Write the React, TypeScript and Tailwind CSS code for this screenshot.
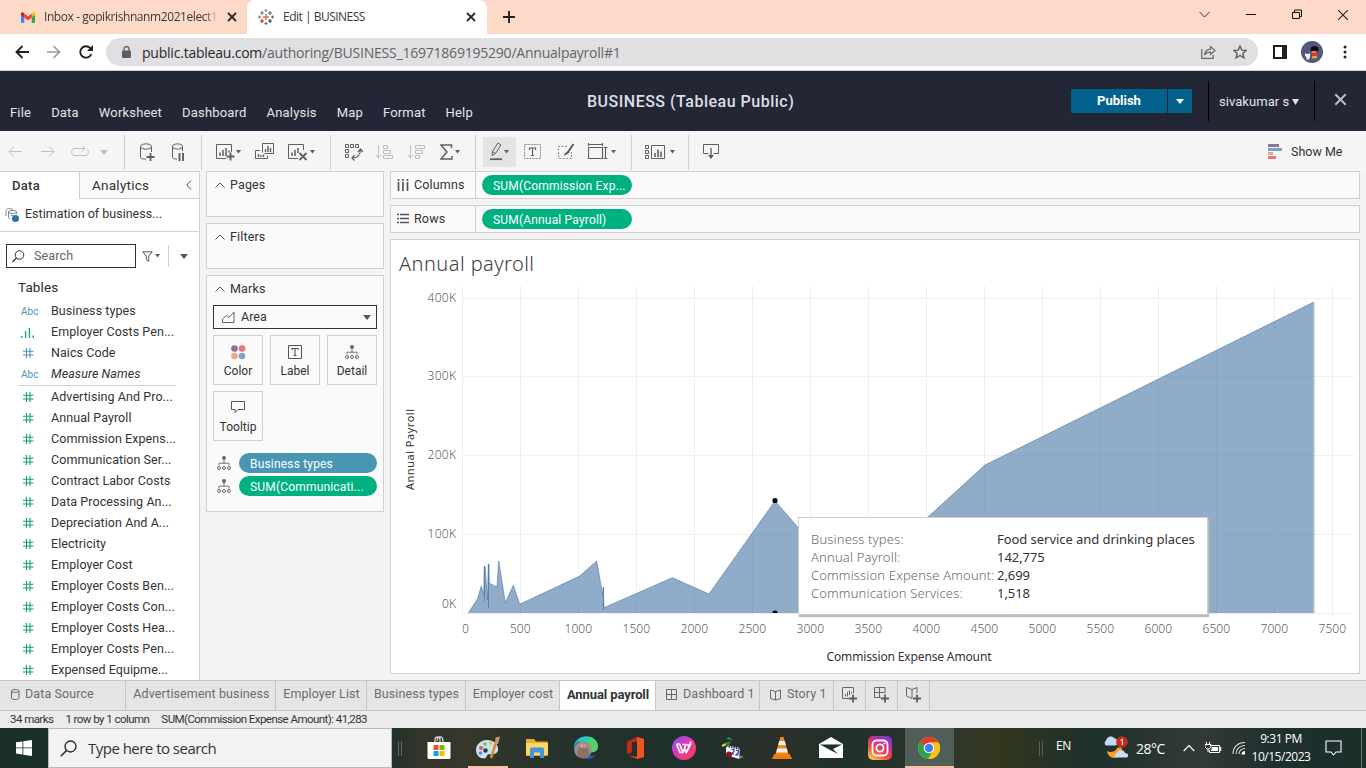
import React from "react";

const benton = "font-['Roboto','Liberation_Sans',sans-serif]";
const segoe = "font-['Open_Sans','Noto_Sans',sans-serif]";
const book = "font-['Noto_Sans','Open_Sans',sans-serif]";

function Svg({ w, h = 20, className = "", children }: { w: number; h?: number; className?: string; children: React.ReactNode }) {
  return (
    <svg width={w} height={h} viewBox={`0 0 ${w} ${h}`} fill="none" className={`shrink-0 ${className}`}>
      {children}
    </svg>
  );
}

/* ---------- Browser chrome ---------- */

function Gmail() {
  return (
    <Svg w={14} h={11}>
      <path d="M0 1.500V10a1 1 0 0 0 1 1h2.300V4.500Z" fill="#4285f4" />
      <path d="M14 1.500V10a1 1 0 0 1-1 1h-2.300V4.500Z" fill="#34a853" />
      <path d="M10.700 1.600 12 .5c.9-.6 2 0 2 1.200V3l-3.300 2.600Z" fill="#fbbc04" />
      <path d="M3.300 1.600 7 4.500l3.700-2.900v4L7 8.500 3.300 5.600Z" fill="#ea4335" />
      <path d="M0 3V1.700C0 .5 1.100-.1 2 .5l1.300 1.100v4Z" fill="#c5221f" />
    </Svg>
  );
}

function TableauMark() {
  return (
    <Svg w={16} h={16}>
      <g strokeWidth="1.200">
        <path d="M8 5v6M5 8h6" stroke="#e8762d" strokeWidth="1.500" />
        <path d="M4 2v4M2 4h4" stroke="#5b879b" />
        <path d="M12 2v4M10 4h4" stroke="#5b6591" />
        <path d="M4 10v4M2 12h4" stroke="#c72037" />
        <path d="M12 10v4M10 12h4" stroke="#1f457e" />
        <path d="M8 0v3M6.500 1.500h3" stroke="#7199a6" />
        <path d="M8 13v3M6.500 14.500h3" stroke="#5b6591" />
        <path d="M1.500 6.500v3M0 8h3" stroke="#5b879b" />
        <path d="M14.500 6.500v3M13 8h3" stroke="#5b6591" />
      </g>
    </Svg>
  );
}

function Cross({ size, className = "", sw = 1.8 }: { size: number; className?: string; sw?: number }) {
  return (
    <svg width={size} height={size} viewBox="0 0 10 10" fill="none" className={`shrink-0 ${className}`}>
      <path d="M1 1l8 8M9 1l-8 8" stroke="currentColor" strokeWidth={sw} />
    </svg>
  );
}

function TabStrip() {
  return (
    <div className={`flex h-[34px] items-center bg-[#fddac7] text-[12px] text-[#3c3836] ${segoe}`}>
      <div className="flex h-full w-[247px] items-center rounded-br-lg pl-[21px]">
        <Gmail />
        <div className="ml-[9px] w-[176px] whitespace-nowrap tracking-[-0.42px] [mask-image:linear-gradient(to_right,black_91%,transparent_99%)]">
          Inbox - gopikrishnanm2021elect1
        </div>
        <Cross size={10} className="ml-[7px] text-[#2d2a29]" />
      </div>
      <div className="flex h-full w-[240px] items-center rounded-t-lg bg-white pl-[11px]">
        <TableauMark />
        <span className="ml-[9px] w-[183px] tracking-[-0.5px]">Edit | BUSINESS</span>
        <Cross size={10} className="text-[#2d2a29]" />
      </div>
      <Svg w={12} h={12} className="ml-[16px]">
        <path d="M6 0v12M0 6h12" stroke="#222" strokeWidth="1.900" />
      </Svg>
      <div className="ml-auto flex items-center pb-[5px] pr-[17px] text-[#1b1b1b]">
        <Svg w={11} h={7}><path d="M.5 1l5 5 5-5" stroke="#333" /></Svg>
        <Svg w={11} h={11} className="ml-[36px]"><path d="M0 5.500h10" stroke="#111" /></Svg>
        <Svg w={11} h={11} className="ml-[35px]"><path d="M.5 3.500h7v6h-7zM2.500 3V1h7v6.500H8" stroke="#111" /></Svg>
        <Cross size={12} className="ml-[34px] text-[#222]" sw={0.9} />
      </div>
    </div>
  );
}

function AddressBar() {
  return (
    <div className="flex h-[37px] items-center border-b border-[#cfd0d3] bg-white">
      <Svg w={14} h={14} className="ml-[15px]">
        <path d="M14 7H1.500M7.500 1L1.500 7l6 6" stroke="#222" strokeWidth="1.900" />
      </Svg>
      <Svg w={14} h={14} className="ml-[18px]">
        <path d="M0 7h12.500M6.500 1l6 6-6 6" stroke="#9b9b9b" strokeWidth="1.700" />
      </Svg>
      <Svg w={14} h={14} className="ml-[18px]">
        <path d="M12.300 9A5.700 5.700 0 1 1 11.300 3.200L13 5" stroke="#222" strokeWidth="1.900" />
        <path d="M14 0v6H8z" fill="#222" />
      </Svg>
      <div className="ml-[13px] flex h-[28px] w-[1152px] items-center rounded-full bg-[#e0e0e2] pl-[16px] pr-[11px]">
        <Svg w={9} h={12}>
          <path d="M2 5V3a2.500 2.500 0 0 1 5 0v2" stroke="#5c5e61" strokeWidth="1.300" />
          <rect y="4.500" width="9" height="7.500" rx="1" fill="#5c5e61" />
        </Svg>
        <span className={`ml-[11px] text-[14px] tracking-[-0.22px] text-[#626365] ${segoe}`}>
          <span className="text-[#27282a]">public.tableau.com</span>/authoring/BUSINESS_16971869195290/Annualpayroll#1
        </span>
        <Svg w={15} h={14} className="ml-auto">
          <path d="M.7 4v9.300h11.500V10" stroke="#66686b" strokeWidth="1.200" />
          <path d="M3.500 10C4 6 6 4.500 9.500 4.200V1.500L14 5.500l-4.500 4V7C7 7 5 7.800 3.500 10z" stroke="#66686b" strokeWidth="1.200" />
        </Svg>
        <Svg w={14} h={14} className="ml-[17px]">
          <path d="M7 1l1.800 4.100 4.400.4-3.400 2.900 1.100 4.400L7 10.500l-3.900 2.300 1.100-4.400L.8 5.500l4.400-.4z" stroke="#5c5e61" strokeWidth="1.400" />
        </Svg>
      </div>
      <Svg w={14} h={14} className="ml-[15px]">
        <path d="M1 1h12v12H1z" stroke="#1e1f21" strokeWidth="2" />
        <path d="M9 0h5v14H9z" fill="#1e1f21" />
      </Svg>
      <Svg w={22} h={22} className="ml-[14px]">
        <circle cx="11" cy="11" r="11" fill="#53597d" />
        <ellipse cx="13.500" cy="8.500" rx="4" ry="3.500" fill="#120f14" />
        <path d="M10.500 10h5.500v5h-5z" fill="#d33a36" />
        <path d="M10.500 10.500h5v1h-5z" fill="#f0b49a" />
        <path d="M11 15h5v2.500h-5z" fill="#e8a33c" />
        <path d="M4 12l1.500 1h2l1.500-1v4l-1 2.500H5.500V16L4 15z" fill="#f5f3f5" />
      </Svg>
      <Svg w={4} h={14} className="ml-[20px]">
        <circle cx="2" cy="2" r="1.500" fill="#222" /><circle cx="2" cy="7" r="1.500" fill="#222" /><circle cx="2" cy="12" r="1.500" fill="#222" />
      </Svg>
    </div>
  );
}

/* ---------- Tableau header ---------- */

function Header() {
  return (
    <div className={`flex h-[60px] bg-[#232635] text-[13px] text-[#e4e5e8] ${benton}`}>
      <div className="flex w-[587px] gap-[20px] pl-[10px] pt-[32px] tracking-[0.18px]">
        {["File", "Data", "Worksheet", "Dashboard", "Analysis", "Map", "Format", "Help"].map((m) => (
          <span key={m}>{m}</span>
        ))}
      </div>
      <div className="w-[484px] whitespace-nowrap pt-[19px] text-[16px] font-medium tracking-[0.5px] text-[#dedee3]">BUSINESS (Tableau Public)</div>
      <div className="mt-[18px] flex h-[24px] items-center gap-px text-white">
        <div className="flex h-full w-[96px] items-center justify-center rounded-l-[1px] bg-[#04618b] font-bold">Publish</div>
        <div className="flex h-full w-[24px] items-center justify-center rounded-r-[1px] bg-[#04618b]">
          <Svg w={8} h={5}><path d="M0 0h8L4 5z" fill="#fff" /></Svg>
        </div>
      </div>
      <div className="ml-[16px] mt-[10px] flex h-[40px] w-[107px] items-center border-x border-black pl-[10px] pt-px">
        <span className="tracking-[0.05px]">sivakumar s</span>
        <Svg w={7} h={6} className="ml-[3px]"><path d="M0 0h7L3.500 6z" fill="#e4e5e8" /></Svg>
      </div>
      <Cross size={13} className="ml-[19px] mt-[22px] text-[#bfc0c6]" sw={1.5} />
    </div>
  );
}

/* ---------- Toolbar ---------- */

const G = "#5f5f5f";
const L = "#bdbdbd";

function Sep({ className }: { className: string }) {
  return <div className={`mt-[2px] h-[35px] w-px shrink-0 self-start bg-[#cfcfcf] ${className}`} />;
}
function Caret({ className = "", color = "#5f5f5f" }: { className?: string; color?: string }) {
  return <Svg w={5} h={4} className={className}><path d="M0 0h5L2.500 3.500z" fill={color} /></Svg>;
}

function Toolbar() {
  return (
    <div className={`flex h-[40px] items-center bg-[#f5f5f5] pt-[2px] ${benton}`}>
      <Svg w={14} className="ml-[8px]"><path d="M14 9.500H1.500M6 4.500l-5 5 5 5" stroke={L} /></Svg>
      <Svg w={14} className="ml-[19px]"><path d="M0 9.500h12.500M8 4.500l5 5-5 5" stroke={L} /></Svg>
      <Svg w={18} className="ml-[16px]"><path d="M13.500 6.500H4a3.500 3.500 0 0 0 0 7h10a3.500 3.500 0 0 0 2.500-6M11 3.500l3 3-3 3" stroke={L} /></Svg>
      <Svg w={8} h={5} className="ml-[11px]"><path d="M0 0h8L4 5z" fill={L} /></Svg>
      <Sep className="ml-[16px]" />
      <Svg w={15} className="ml-[15px]">
        <path d="M6 17H3.500C1.500 17 .5 16 .5 15V4.500C.5 1 11.500 1 11.500 4.500V10M.5 4.500c0 3.500 11 3.500 11 0" stroke={G} />
        <path d="M10.500 11v8M6.500 15h8" stroke={G} strokeWidth="1.800" />
      </Svg>
      <Svg w={13} className="ml-[17px]">
        <path d="M5 17H3.500C1.500 17 .5 16 .5 15V4.500C.5 1 10.500 1 10.500 4.500V9M.5 4.500c0 3.500 10 3.500 10 0" stroke={G} />
        <path d="M7.500 11v8M11 11v8" stroke={G} strokeWidth="1.900" />
      </Svg>
      <Sep className="ml-[16px]" />
      <Svg w={19} className="ml-[14px]">
        <path d="M10 16.500H.5v-14h15V10" stroke={G} />
        <path d="M4 10.500V14M7 8v6M10 6v8M13 8.500v2" stroke={G} strokeWidth="1.500" />
        <path d="M14.500 10.500v8M10.500 14.500h8" stroke={G} strokeWidth="1.800" />
      </Svg>
      <Caret className="ml-[1px]" />
      <Svg w={19} className="ml-[14px]">
        <path d="M7.500 10.500v-9h11v10h-9M5 8.500H.5v8h12v-3" stroke={G} />
        <path d="M10.500 7v3M13 4v6M15.500 6v4M3.500 12v3M6 13v2M8.500 12.500v2.500" stroke={G} strokeWidth="1.400" />
      </Svg>
      <Svg w={20} className="ml-[14px]">
        <path d="M10 16.500H.5v-14h15V8" stroke={G} />
        <path d="M4 10.500V14M7 8v6M10 6v5" stroke={G} strokeWidth="1.500" />
        <path d="M11.500 11l7 7M18.500 11l-7 7" stroke={G} strokeWidth="1.800" />
      </Svg>
      <Caret className="ml-[2px]" />
      <Sep className="ml-[15px]" />
      <Svg w={18} className="ml-[14px]">
        <path d="M.5 2.500h3v3h-3zM5.500 2.500h3v3h-3zM10.500 2.500h3v3h-3zM.5 7.500h3v3h-3zM.5 12.500h3v3h-3z" stroke={G} />
        <path d="M15.500 7.500c0 5-3 8.500-8 8.500M13 10l2.500-3 2.500 3M9.500 13l-2.500 3 2.500 2.500" stroke={G} strokeWidth="1.200" />
      </Svg>
      <Svg w={18} className="ml-[13px]">
        <path d="M2.500 3v13M0 13l2.500 3L5 13M7.500 3.500h4v3h-4zM7.500 8.500h7v3h-7zM7.500 13.500h9v3h-9z" stroke={L} />
      </Svg>
      <Svg w={18} className="ml-[14px]">
        <path d="M2.500 3v13M0 13l2.500 3L5 13M7.500 3.500h9v3h-9zM7.500 8.500h7v3h-7zM7.500 13.500h4v3h-4z" stroke={L} />
      </Svg>
      <Svg w={13} className="ml-[14px]">
        <path d="M11.500 6V3H1l6 7-6 7h11v-3" stroke={G} strokeWidth="1.500" />
      </Svg>
      <Caret className="ml-[2px]" />
      <Sep className="ml-[15px]" />
      <div className="ml-[7px] flex h-[30px] w-[33px] items-center bg-[#e4e4e4]">
        <Svg w={12} className="ml-[7px]">
          <path d="M2.500 9.500L8 1l3 2-5.500 8.500-3.500 2z" stroke={G} />
          <path d="M2.500 9.500l3 2" stroke={G} /><path d="M0 17.200h12" stroke={G} strokeWidth="1.800" />
        </Svg>
        <Caret className="ml-[2px]" />
      </div>
      <Svg w={17} className="ml-[8px]">
        <path d="M.5 2.500h16v14H.5z" stroke="#8a8a8a" strokeDasharray="2 1" />
        <path d="M5.500 8v-2h6v2M8.500 6v7.500M7 13.500h3" stroke={G} strokeWidth="1.200" />
      </Svg>
      <Svg w={17} className="ml-[17px]">
        <path d="M9 4.500H.5v12h13V10" stroke="#8a8a8a" strokeDasharray="2 1.500" />
        <path d="M15.500 2l-5.500 8" stroke={G} strokeWidth="2" /><path d="M10 9l1.500 1.500L8 13l-2 .5.5-2z" fill={G} />
      </Svg>
      <Svg w={20} className="ml-[13px]">
        <path d="M.5 5.500h14v11H.5zM.5 1v3M14.500 1v3M.5 2.500h14M17.500 5.500v11M16 5.500h3.500M16 16.500h3.500" stroke={G} strokeWidth="1.200" />
      </Svg>
      <Caret className="ml-[3px]" />
      <Sep className="ml-[15px]" />
      <Svg w={20} className="ml-[13px]">
        <path d="M.5 3.500h3v3h-3zM.5 8.500h3v3h-3zM.5 13.500h3v3h-3zM6.500 3.500h13v13h-13z" stroke={G} />
        <path d="M10 11v4M13 7.500V15M16 9.500V15" stroke={G} strokeWidth="1.600" />
      </Svg>
      <Caret className="ml-[5px]" />
      <Sep className="ml-[13px]" />
      <Svg w={16} className="ml-[14px]">
        <path d="M5.500 11.500h-5v-9h15v9h-5" stroke={G} /><path d="M8 6v9" stroke={G} strokeWidth="1.400" /><path d="M5 13h6l-3 4z" fill={G} />
      </Svg>
      <Svg w={15} h={16} className="mb-px ml-auto">
        <path d="M0 0h11v3H0z" fill="#8b7596" /><path d="M0 4h14v3H0z" fill="#7ea2c6" />
        <path d="M0 8h5v3H0z" fill="#efa780" /><path d="M0 12h8v3H0z" fill="#ec7381" />
      </Svg>
      <span className="ml-[8px] mr-[23px] w-[52px] whitespace-nowrap text-[12.5px] text-[#333]">Show Me</span>
    </div>
  );
}

/* ---------- Data pane ---------- */

function Hash({ color }: { color: string }) {
  return <Svg w={11} h={10}><path d="M3.500 0v10M7 0v10M0 3.200h10.500M0 7h10.500" stroke={color} strokeWidth="1.100" /></Svg>;
}
function FieldIcon({ kind }: { kind: string }) {
  if (kind === "abc") return <span className="text-[10px] text-[#4996b2]">Abc</span>;
  if (kind === "bin")
    return <Svg w={14} h={10}><path d="M.8 8v2M4.600 3v7M8.400 0v10M12.200 7.500V10" stroke="#12a07c" strokeWidth="1.300" /></Svg>;
  return <Hash color={kind === "dim" ? "#4996b2" : "#12a07c"} />;
}
function Field({ kind, name, italic = false }: { kind: string; name: string; italic?: boolean }) {
  return (
    <div className="flex h-[21px] items-center pl-[21px]">
      <div className={`flex w-[30px] items-center ${kind === "abc" || kind === "bin" ? "" : "pb-px pl-[2px]"}`}><FieldIcon kind={kind} /></div>
      <span className={`whitespace-nowrap tracking-[0.07px] ${italic ? "italic" : ""}`}>{name}</span>
    </div>
  );
}

function DataPane() {
  return (
    <div className="flex h-[509px] w-[200px] shrink-0 flex-col overflow-hidden border-r border-t border-[#d0d0d0] bg-white text-[12.5px] text-[#333]">
      <div className="flex h-[27px] shrink-0 text-[13.5px]">
        <div className="flex w-[79px] items-center pl-[12px] text-[13px] font-medium tracking-[0.3px]">Data</div>
        <div className="flex flex-1 items-center border-b border-l border-[#d0d0d0] bg-[#fafafa] pl-[12px] tracking-[0.25px]">
          Analytics
          <Svg w={6} h={10} className="ml-auto mr-[7px]"><path d="M5 .5L.8 5 5 9.500" stroke="#555" /></Svg>
        </div>
      </div>
      <div className="flex h-[33px] shrink-0 items-center border-b border-[#d0d0d0] pb-[2px] pl-[5px]">
        <Svg w={14} h={14} className="mt-[1px]">
          <path d="M8 1.500C6 .3 1 .3 1 2.500V8M3.500 3.500v6l2 1.500M3.500 4c0-2 8-2 8 0v2M3.500 4c0 2 8 2 8 0M6 7.500h2" stroke="#777" strokeWidth=".9" />
          <circle cx="10.500" cy="10.500" r="3.500" fill="#1f77ab" />
        </Svg>
        <span className="ml-[6px] whitespace-nowrap">Estimation of business...</span>
      </div>
      <div className="mt-[12px] flex h-[24px] shrink-0 items-center pl-[6px]">
        <div className="flex h-full w-[130px] items-center border border-[#333] pl-[5px] text-[#666]">
          <Svg w={13} h={13}><circle cx="7.500" cy="5" r="4.300" stroke="#333" /><path d="M4.500 8L.5 12" stroke="#333" strokeWidth="1.300" /></Svg>
          <span className="ml-[9px] tracking-[0.15px]">Search</span>
        </div>
        <Svg w={11} h={11} className="ml-[6px]"><path d="M.8.800h9.400L6.700 5v5.300L4.300 8.500V5z" stroke="#555" /></Svg>
        <Caret className="ml-[2px]" />
        <div className="ml-[8px] h-[22px] w-px bg-[#d0d0d0]" />
        <Svg w={8} h={5} className="ml-[11px]"><path d="M0 0h8L4 5z" fill="#555" /></Svg>
      </div>
      <div className="mt-[10px] shrink-0 pl-[18px] text-[13.5px] leading-[19px] tracking-[0.1px] text-[#2a2a2a]">Tables</div>
      <div className="mt-[4px]">
        <Field kind="abc" name="Business types" />
        <Field kind="bin" name="Employer Costs Pen..." />
        <Field kind="dim" name="Naics Code" />
        <Field kind="abc" name="Measure Names" italic />
        <div className="mb-px ml-[18px] mr-[23px] h-px bg-[#d0d0d0]" />
        {["Advertising And Pro...", "Annual Payroll", "Commission Expens...", "Communication Ser...", "Contract Labor Costs", "Data Processing An...", "Depreciation And A...", "Electricity", "Employer Cost", "Employer Costs Ben...", "Employer Costs Con...", "Employer Costs Hea...", "Employer Costs Pen...", "Expensed Equipme..."].map((n, i) => (
          <Field key={i} kind="num" name={n} />
        ))}
      </div>
    </div>
  );
}

/* ---------- Cards ---------- */

function CardTitle({ children }: { children: React.ReactNode }) {
  return (
    <div className="flex h-[27px] items-center pb-px pl-[8px]">
      <Svg w={10} h={6}><path d="M.5 5.500L5 1l4.500 4.500" stroke="#555" /></Svg>
      <span className="ml-[5px] tracking-[0.15px]">{children}</span>
    </div>
  );
}
function DetailIcon({ className = "" }: { className?: string }) {
  return (
    <Svg w={14} h={14} className={className}>
      <circle cx="7" cy="2" r="2" fill="#666" />
      <path d="M7 3v5M2 9.500V7.200h10v2.300" stroke="#777" />
      <circle cx="2" cy="12" r="1.500" stroke="#666" /><circle cx="7" cy="12" r="1.500" stroke="#666" /><circle cx="12" cy="12" r="1.500" stroke="#666" />
    </Svg>
  );
}
function MarkButton({ label, children }: { label: string; children: React.ReactNode }) {
  return (
    <div className="flex h-[50px] w-[50px] flex-col items-center border border-[#d0d0d0] bg-[#fafafa] pt-[8px] text-[12px]">
      {children}
      <span className="mt-[2px] whitespace-nowrap leading-[16px]">{label}</span>
    </div>
  );
}

function Cards() {
  const card = "border border-[#d0d0d0] bg-[#fafafa]";
  return (
    <div className="ml-[6px] flex w-[178px] shrink-0 flex-col gap-[6px] text-[12.5px] text-[#333]">
      <div className={`h-[46px] ${card}`}><CardTitle>Pages</CardTitle></div>
      <div className={`h-[46px] ${card}`}><CardTitle>Filters</CardTitle></div>
      <div className={`h-[237px] ${card}`}>
        <CardTitle>Marks</CardTitle>
        <div className="mx-[6px] mt-[2px] flex h-[24px] items-center border border-[#333] pl-[8px]">
          <Svg w={13} h={12}><path d="M.5 11.500V8l4-3.500L7 6.500 12 1v10.500z" stroke="#666" /></Svg>
          <span className="ml-[6px]">Area</span>
          <Svg w={8} h={5} className="ml-auto mr-[5px]"><path d="M0 0h8L4 5z" fill="#555" /></Svg>
        </div>
        <div className="mx-[6px] mt-[6px] grid grid-cols-3 justify-between gap-x-[7px] gap-y-[6px]">
          <MarkButton label="Color">
            <Svg w={16} h={17}>
              <circle cx="4.500" cy="4.500" r="3.300" fill="#8b7596" /><circle cx="12" cy="4.500" r="3.300" fill="#ec7381" />
              <circle cx="4.500" cy="12" r="3.300" fill="#efa780" /><circle cx="12" cy="12" r="3.300" fill="#7ea2c6" />
            </Svg>
          </MarkButton>
          <MarkButton label="Label">
            <Svg w={14} h={17}><path d="M.5 1.500h13v13H.5z" stroke="#555" /><path d="M4 6V4.500h6V6M7 4.500v7M5.500 11.500h3" stroke="#555" strokeWidth="1.100" /></Svg>
          </MarkButton>
          <MarkButton label="Detail"><DetailIcon className="mb-[2px] mt-[1px]" /></MarkButton>
          <MarkButton label="Tooltip">
            <Svg w={14} h={17}><path d="M.5 1.500h13v8h-6.500l-3 3v-3H.5z" stroke="#555" /></Svg>
          </MarkButton>
        </div>
        <div className="mt-[12px] flex flex-col gap-[3px] pl-[10px]">
          {[["Business types", "bg-[#4996b2]"], ["SUM(Communicati...", "bg-[#00b180]"]].map(([t, c]) => (
            <div key={t} className="flex items-center">
              <DetailIcon />
              <div className={`ml-[8px] flex h-[20px] w-[138px] items-center rounded-full pl-[11px] pt-px text-[12px] tracking-[0.18px] text-white ${c}`}>{t}</div>
            </div>
          ))}
        </div>
      </div>
    </div>
  );
}

/* ---------- Shelves and view ---------- */

function Shelf({ label, pill, icon }: { label: string; pill: string; icon: React.ReactNode }) {
  return (
    <div className="flex h-[28px] shrink-0 items-center border border-[#d0d0d0] bg-[#fafafa] text-[12.5px] text-[#333]">
      <div className="flex h-full w-[85px] items-center border-r border-[#d0d0d0] pl-[6px]">
        {icon}
        <span className="ml-[5px] tracking-[0.15px]">{label}</span>
      </div>
      <div className="ml-[6px] flex h-[20px] w-[150px] items-center whitespace-nowrap rounded-full bg-[#00b180] pl-[11px] pt-px text-[12px] tracking-[0.18px] text-white">{pill}</div>
    </div>
  );
}

const area =
  "468.300,613 477.300,599.300 481.300,586 483.700,595 484.300,566 485,566 487.500,600 488.300,564 489,564 489.300,583.300 497,587 498.700,561 505.300,602.700 513.300,585.300 519.700,604.300 579.300,576.300 596.700,561 602.700,595 603.300,587 604,607.700 672.300,577.700 709,594 775,501 870,610 927.500,517.500 985,465 1314,302";

function Chart() {
  const xs = Array.from({ length: 16 }, (_, i) => i);
  return (
    <svg width={968} height={393} viewBox="391 280 968 393" className={`block text-[12px] ${book}`}>
      <g stroke="#efefef">
        {xs.map((i) => <path key={i} d={`M${462.5 + 58 * i} 286V617`} />)}
        {[298.5, 376.5, 455.5, 534.5, 613.5].map((y) => <path key={y} d={`M462 ${y}H1354`} />)}
      </g>
      <polygon points={`${area} 1314,613 468,613`} fill="#4e79a7" fillOpacity="0.62" />
      <polyline points={area} fill="none" stroke="#4e79a7" strokeOpacity="0.7" strokeWidth="0.9" />
      <path d="M484.500 566v35M488.500 564v44M603.400 587v23" stroke="#4e79a7" strokeOpacity="0.8" />
      <path d="M1314 302.500V613" stroke="#b9cbde" strokeWidth="1.500" />
      <circle cx="775" cy="500.500" r="2.600" />
      <path d="M772.400 613a2.600 2.600 0 0 1 5.200 0z" />
      <g fill="#606060">
        <g className="font-light tracking-[0.35px]">
          {[["400K", 302], ["300K", 380], ["200K", 459], ["100K", 538], ["0K", 608]].map(([t, y]) => (
            <text key={t} x="456.500" y={y} textAnchor="end">{t}</text>
          ))}
        </g>
        <g className="font-light">
          {xs.map((i) => <text key={i} x={i === 0 ? 465.5 : 462.3 + 58 * i} y="633" textAnchor="middle">{i * 500}</text>)}
        </g>
      </g>
      <text x="909" y="661" textAnchor="middle" fill="#333" className="text-[12px]" textLength="165">Commission Expense Amount</text>
      <text transform="translate(413.500 449.500) rotate(-90)" textAnchor="middle" fill="#333" className="text-[11px]" textLength="81">Annual Payroll</text>
    </svg>
  );
}

function View() {
  const rows = [["Business types:", "Food service and drinking places"], ["Annual Payroll:", "142,775"], ["Commission Expense Amount:", "2,699"], ["Communication Services:", "1,518"]];
  return (
    <div className="relative h-[435px] border border-[#d0d0d0] bg-white">
      <div className={`h-[40px] pl-[8px] pt-[9px] text-[20px] font-light leading-[30px] tracking-[0.45px] text-[#3d3d3d] ${book}`}>Annual payroll</div>
      <Chart />
      <div className={`absolute left-[407px] top-[277px] grid h-[98px] w-[410px] grid-cols-[186px_1fr] content-start whitespace-nowrap border border-[#cccccc] bg-white pl-[12px] pt-[12px] text-[13px] leading-[18px] text-[#333] shadow-[1px_2px_1px_#bbb] ${book}`}>
        {rows.map(([a, b]) => (
          <React.Fragment key={a}>
            <span className="font-light tracking-[0.16px] text-[#6a6a6a]">{a}</span>
            <span className="tracking-[-0.05px]">{b}</span>
          </React.Fragment>
        ))}
      </div>
    </div>
  );
}

/* ---------- Sheet tabs ---------- */

function Plus() {
  return <path d="M12 8.500v8M8 12.500h8" stroke="#5f5f5f" strokeWidth="1.800" />;
}
function SheetTabs() {
  const tab = "flex h-full shrink-0 items-center whitespace-nowrap border-r border-[#c6c6c6] pb-[2px]";
  return (
    <div className="flex h-[31px] border-y border-[#c6c6c6] bg-[#e5e5e5] text-[12.5px] tracking-[0.1px] text-[#6b6b6b]">
      <div className={`${tab} w-[126px] pl-[11px]`}>
        <Svg w={9} h={11}><path d="M.5 2v7c0 2 7.500 2 7.500 0V2C8 0 .5 0 .5 2c0 1.800 7.500 1.800 7.500 0" stroke="#666" /></Svg>
        <span className="ml-[5px]">Data Source</span>
      </div>
      <div className={`${tab} w-[150px] justify-center pl-[2px]`}>Advertisement business</div>
      <div className={`${tab} w-[91px] justify-center pl-px`}>Employer List</div>
      <div className={`${tab} w-[99px] justify-center pl-px`}>Business types</div>
      <div className={`${tab} w-[94px] justify-center pl-px`}>Employer cost</div>
      <div className={`${tab} w-[96px] justify-center bg-white pl-px text-[13px] font-bold tracking-[-0.1px] text-[#333]`}>Annual payroll</div>
      <div className={`${tab} w-[104px] pl-[10px]`}>
        <Svg w={11} h={11}><path d="M.5.500h10v10H.5zM5.500.500v10M.5 5.500h10" stroke="#666" /></Svg>
        <span className="ml-[6px]">Dashboard 1</span>
      </div>
      <div className={`${tab} w-[74px] pl-[10px]`}>
        <Svg w={11} h={12}><path d="M5.500 2.500L.5 1v8.500l5 1.500 5-1.500V1zM5.500 2.500V11" stroke="#666" /></Svg>
        <span className="ml-[6px]">Story 1</span>
      </div>
      <div className={`${tab} w-[32px] justify-center`}>
        <Svg w={17} h={17}><path d="M8 12.500H1.500v-11h11V7M4.500 8v2.500M6.500 6v4.500M8.500 4.500V9M10.500 6v1.500" stroke="#666" /><Plus /></Svg>
      </div>
      <div className={`${tab} w-[32px] justify-center`}>
        <Svg w={17} h={17}><path d="M8 11.500H1.500v-10h10.500V7M6.500 1.500v10M1.500 6.500H12" stroke="#666" /><Plus /></Svg>
      </div>
      <div className={`${tab} w-[32px] justify-center`}>
        <Svg w={17} h={17}><path d="M7 3.500L1.500 1.500v8.500L7 12.500M7 3.500l5-2V7M7 3.500v9" stroke="#666" /><Plus /></Svg>
      </div>
    </div>
  );
}

/* ---------- Taskbar ---------- */

function Task({ className = "", children }: { className?: string; children: React.ReactNode }) {
  return (
    <div className={`flex h-full w-[49.1px] shrink-0 items-center justify-center ${className}`}>
      <svg width="24" height="24" viewBox="0 0 24 24" fill="none">{children}</svg>
    </div>
  );
}

function Taskbar() {
  return (
    <div className={`flex h-[40px] items-center bg-[linear-gradient(90deg,#1b2f2b_0%,#1d302b_28%,#34352a_31%,#36372a_34%,#26322c_41%,#1d302c_50%,#2c3029_57%,#1f302b_62%,#30362a_70%,#33371f_73%,#1d302b_80%,#333a38_88%,#1f302e_93%,#1b2f2b_100%)] text-white ${segoe}`}>
      <div className="flex w-[48px] justify-center">
        <Svg w={16} h={16}><path d="M0 2.300L6.500 1.400v6.100H0zM7.300 1.300L16 0v7.500H7.300zM0 8.300h6.500v6.200L0 13.600zM7.300 8.300H16V16l-8.700-1.300z" fill="#fff" /></Svg>
      </div>
      <div className="flex h-full w-[344px] items-center border border-[#b9b9b9] bg-[#f2f2f2] pl-[11px] text-[#333]">
        <Svg w={17} h={17}><circle cx="10.500" cy="6.500" r="5.500" stroke="#222" strokeWidth="1.300" /><path d="M6.500 10.500L.8 16.200" stroke="#222" strokeWidth="1.400" /></Svg>
        <span className="ml-[11px] text-[15px] tracking-[-0.52px]">Type here to search</span>
      </div>
      <div className="ml-[6px] mr-[12px] h-[15px] w-[4px] border-x border-[#63665c]" />
      <Task>
        <path d="M8 6V3.500C8 0 13 0 13 3.500V6M10 5C10-.5 16-.5 16 5v1" stroke="#ddd" strokeWidth="1.200" />
        <path d="M.5 6h23v15.500a1.500 1.500 0 0 1-1.500 1.500H2a1.500 1.500 0 0 1-1.500-1.500z" fill="#fff" />
        <path d="M6.500 9h5v5h-5z" fill="#f25022" /><path d="M12.500 9h5v5h-5z" fill="#7fba00" /><path d="M6.500 15h5v5h-5z" fill="#00a4ef" /><path d="M12.500 15h5v5h-5z" fill="#ffb900" />
      </Task>
      <Task className="bg-[linear-gradient(#f5bfa8,#f5bfa8)] bg-[length:40px_2px] bg-[position:5px_100%] bg-no-repeat">
        <path d="M11 4C5 4 0 8.500 0 14c0 5 4 8.500 8 8.500 3 0 2-3 4-4s9 1 10-4C23 9 18 4 11 4z" fill="#c9e3f2" />
        <circle cx="5" cy="12" r="2" fill="#e2574c" /><circle cx="9" cy="8" r="1.800" fill="#7ac142" /><circle cx="14.500" cy="7" r="1.800" fill="#f2c230" /><circle cx="4.500" cy="17" r="1.800" fill="#4b8fd6" /><circle cx="9.500" cy="14.500" r="2.200" fill="#263a3c" />
        <path d="M20.500 5l-5.500 17" stroke="#d98b35" strokeWidth="2.500" /><path d="M19 8L19.500 1.500 24 .5 22 8z" fill="#c39a74" />
      </Task>
      <Task>
        <path d="M1 3h8l2 2.500h11.500V20H1z" fill="#e9ae2b" /><path d="M1 7h22v12H1z" fill="#fbd566" />
        <path d="M5 22v-9a1.500 1.500 0 0 1 1.500-1.500h11A1.500 1.500 0 0 1 19 13v9h-4v-5.500H9V22z" fill="#3f97d9" />
      </Task>
      <Task>
        <path d="M0 11C1-3 23-3 24 10c0 5-4 7-8 6l-4-7z" fill="#2fc6c2" /><path d="M14 1c6 1 10 5 10 9.500 0 4-4 6.500-8 5.500z" fill="#53d06a" />
        <path d="M6 20c5 4 12 4 16-1-3 1.500-6 1-9-1z" fill="#1266b8" /><path d="M0 12c0-3 2-6 5-7l4 3-6 12c-2-2-3-5-3-8z" fill="#2178c9" />
        <circle cx="9" cy="14" r="8.500" fill="#a58c83" /><path d="M3.500 20c0-6 1-9 3-10l1.500 3 1-3 1 3 1.500-3c2 1 3.500 4 3.500 10-3 3-8.500 3-11.500 0z" fill="#8a716a" /><circle cx="7.500" cy="10" r="1.800" fill="#c9a99b" /><circle cx="11" cy="10" r="1.800" fill="#bd9a8d" />
      </Task>
      <Task>
        <path d="M14 1L21 3v18l-7 2-9-3.500 9 1V5L8.500 6.500v10L4 18V6z" fill="#e23b14" /><path d="M14 1l7 2v18l-7 2z" fill="#f0531f" /><path d="M14 1L4 6v12l4.500-1.500v-10L14 5z" fill="#c32a12" />
      </Task>
      <Task>
        <defs><linearGradient id="wps" x1="0" y1="0" x2="1" y2="1"><stop stopColor="#7b4dff" /><stop offset=".5" stopColor="#e83aa8" /><stop offset="1" stopColor="#ff3d55" /></linearGradient></defs>
        <circle cx="12" cy="12" r="12" fill="url(#wps)" />
        <path d="M4.500 8h3l3.500 8.500L14 8.500H10.500M12.500 13l1.800 3.500L18.500 8M15.500 8l1.500 3M18.500 5.500v3.500" stroke="#fff" strokeWidth="1.700" strokeLinejoin="round" /><path d="M4.500 8L8 16.500h3" stroke="#fff" strokeWidth="1.700" strokeLinejoin="round" />
      </Task>
      <Task>
        <path d="M5 9l14 3-1 11-13-4z" fill="#f4f4f6" /><path d="M18 19l5 2-5 2z" fill="#888" />
        <path d="M5 10l14 3" stroke="#111" strokeWidth="1.500" strokeDasharray="1.500 1" />
        <path d="M10.500 13.500h2.500v2l-2.500 2.500H13M15 14.500h2.500v2L15 19h2.500" stroke="#2437b5" strokeWidth="1.100" />
        <circle cx="8" cy="18.500" r="3" fill="#8d1325" /><path d="M5 3l7 1-4-3zM4 7l4 2 2-4z" fill="#2a9140" /><path d="M1 10l4-2" stroke="#e4cf3a" strokeWidth="2" />
      </Task>
      <Task>
        <path d="M10.500 1h3L19 20H5z" fill="#f28a1c" /><path d="M9.300 5h5.400l1.200 4H8.100zM7.200 12.500h9.600l1 4H6.200z" fill="#f3f3f3" />
        <path d="M4.500 17.500c3 2.500 12 2.500 15 0L22 23H2z" fill="#ee7a12" />
      </Task>
      <Task><path d="M0 8l12-7 12 7v14H0z" fill="#fff" /><path d="M1 8.500h22L14 13l5 5-7-3.500z" fill="#1f2f2c" /></Task>
      <Task>
        <defs><linearGradient id="ig" x1="0.200" y1="1" x2="0.800" y2="0"><stop stopColor="#fdc84e" /><stop offset=".3" stopColor="#f4583c" /><stop offset=".6" stopColor="#d52e82" /><stop offset="1" stopColor="#7638d6" /></linearGradient></defs>
        <rect width="24" height="24" rx="5" fill="url(#ig)" /><rect x="4.500" y="4.500" width="15" height="15" rx="4" stroke="#fff" strokeWidth="1.800" /><circle cx="12" cy="12" r="3.600" stroke="#fff" strokeWidth="1.800" /><circle cx="16.500" cy="7.500" r="1.100" fill="#fff" />
      </Task>
      <Task className="bg-[#4f5f58] shadow-[inset_0_-2px_0_#f5bfa8]">
        <circle cx="12" cy="12" r="11" fill="#fbc116" />
        <path d="M12 12L2.500 6.500A11 11 0 0 1 21.500 6.500H12z" fill="#e33b2e" /><path d="M12 12L2.500 6.500A11 11 0 0 0 11 23l5.500-9z" fill="#2ba24c" /><path d="M21.500 6.500H12l4.800 8.300L11.500 23A11 11 0 0 0 21.500 6.500z" fill="#fbc116" />
        <circle cx="12" cy="12" r="5.300" fill="#fff" /><circle cx="12" cy="12" r="4.200" fill="#3f7fee" />
      </Task>
      <div className="ml-auto h-[15px] w-[4px] border-x border-[#5a6250]" />
      <span className="ml-[13px] w-[48px] pb-[5px] text-[12px] tracking-[-0.3px]">EN</span>
      <Svg w={24} h={24}>
        <path d="M3 15c3 2 9 1 10-3l4-1c3 5-1 11-7 11-4 0-7-4-7-7z" fill="#f5a127" />
        <path d="M2 9.500a3 3 0 0 1 0-5C3 1 7-1 10 2c4 0 5 7 1 7.500z" fill="#c5d9f7" />
        <path d="M13 21.500c-3 0-3-4 0-4.500 1-4 7-4 8 0 4 0 4 4.500 1 4.500z" fill="#c9dcf8" />
        <circle cx="18" cy="6" r="5.800" fill="#c42b1c" /><path d="M16.500 4.500L18.300 3v6" stroke="#fff" />
      </Svg>
      <span className="ml-[8px] w-[47px] whitespace-nowrap text-[14px] tracking-[-0.5px]">28°C</span>
      <Svg w={12} h={8}><path d="M.7 7L6 1.500 11.300 7" stroke="#fff" strokeWidth="1.200" /></Svg>
      <Svg w={17} h={12} className="ml-[10px]">
        <path d="M5 3.500h9.500v7H4.500V8M1.500 0v2M4.500 0v2M0 2.500h6V5L4 7H2L0 5zM3 7v3" stroke="#fff" /><path d="M7 5h6v4H6z" fill="#fff" /><path d="M15.500 5v4" stroke="#fff" strokeWidth="1.500" />
      </Svg>
      <Svg w={14} h={14} className="ml-[10px]">
        <path d="M1 13C1 6 6 1.500 13 1.500M4 13C4 8 8 4.500 13 4.500M7 13c0-3 2.500-5.500 6-5.500" stroke="#dfe3e2" strokeWidth="1.100" /><path d="M9.500 13.500c0-2 1.500-3.500 3.500-3.500v3.500z" fill="#fff" />
      </Svg>
      <div className="ml-[4px] w-[62px] whitespace-nowrap text-center text-[12px] leading-[18px] tracking-[-0.48px]">
        <div>9:31 PM</div>
        <div>10/15/2023</div>
      </div>
      <Svg w={17} h={16} className="ml-[13px]"><path d="M1 1h15v11H11l-2.500 3L6 12H1z" stroke="#fff" strokeWidth="1.100" /></Svg>
      <div className="ml-[19px] mr-[4px] h-full w-px bg-[#67736f]" />
    </div>
  );
}

export default function App() {
  return (
    <div className="flex h-[768px] w-[1366px] flex-col overflow-hidden bg-[#f3f3f3]">
      <TabStrip />
      <AddressBar />
      <Header />
      <Toolbar />
      <div className={`flex h-[509px] ${benton}`}>
        <DataPane />
        <Cards />
        <div className="ml-[6px] flex w-[970px] flex-col gap-[6px]">
          <Shelf label="Columns" pill="SUM(Commission Exp..." icon={<Svg w={12} h={12}><path d="M1.500 3v9M6 3v9M10.500 3v9M1.500 0v2M6 0v2M10.500 0v2" stroke="#555" strokeWidth="1.700" /></Svg>} />
          <Shelf label="Rows" pill="SUM(Annual Payroll)" icon={<Svg w={12} h={12}><path d="M3 1.500h9M3 5.500h9M3 9.500h9M0 1.500h2M0 5.500h2M0 9.500h2" stroke="#555" strokeWidth="1.600" /></Svg>} />
          <View />
        </div>
      </div>
      <div className={benton}>
        <SheetTabs />
        <div className="flex h-[17px] items-center gap-[12px] whitespace-nowrap bg-[#ebebeb] pl-[10px] pt-px text-[11.5px] tracking-[-0.55px] text-[#333]">
          <span>34 marks</span>
          <span>1 row by 1 column</span>
          <span>SUM(Commission Expense Amount): 41,283</span>
        </div>
      </div>
      <Taskbar />
    </div>
  );
}
